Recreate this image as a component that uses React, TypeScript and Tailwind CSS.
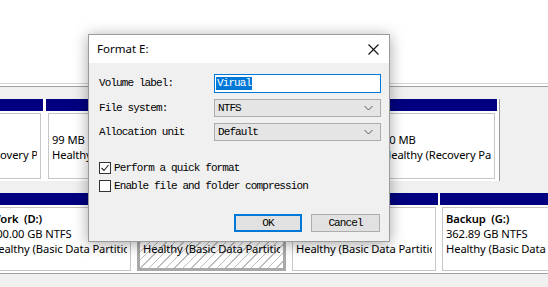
import React from 'react';

const navy = 'bg-[#000080]';

type Part = { w: number; lines?: string[]; hatched?: boolean; bold?: boolean };

const Partition = ({ w, lines = [], hatched, bold }: Part) => (
  <div className="flex flex-col shrink-0" style={{ width: w }}>
    <div className={`h-[12px] ${navy}`} />
    <div className="flex-1 bg-white p-[2px]">
      <div
        className={
          hatched
            ? 'h-full border-[3px] border-[#a9a9a9] px-[3px] pt-[1px] bg-[repeating-linear-gradient(135deg,#ffffff_0px,#ffffff_5px,#bdbdbd_5px,#bdbdbd_6px)]'
            : 'h-full border border-[#c6c6c6] px-[3px] pt-[3px]'
        }
      >
        {lines.map((t, i) => (
          <div
            key={i}
            className={`h-[15px] leading-[15px] whitespace-pre overflow-hidden text-[11.2px] tracking-[-0.1px] text-black ${bold && i === 0 ? 'font-semibold' : ''}`}
          >
            {t}
          </div>
        ))}
      </div>
    </div>
  </div>
);

const Chevron = () => (
  <svg width="9" height="6" viewBox="0 0 9 6" className="shrink-0">
    <polyline points="0.5,1 4.5,5 8.5,1" fill="none" stroke="#5a5a5a" strokeWidth="1" />
  </svg>
);

const Select = ({ value }: { value: string }) => (
  <div className="w-[167px] h-[18px] flex items-center justify-between bg-[#e5e5e5] border border-[#adadad] pl-[3px] pr-[7px]">
    <span>{value}</span>
    <Chevron />
  </div>
);

const CheckBox = ({ checked }: { checked?: boolean }) => (
  <div className="w-[12px] h-[12px] border border-[#333333] bg-white flex items-center justify-center shrink-0">
    {checked && (
      <svg width="10" height="10" viewBox="0 0 10 10">
        <polyline points="1.5,5 4,7.5 8.5,2" fill="none" stroke="#222" strokeWidth="1.1" />
      </svg>
    )}
  </div>
);

const FormatDialog = () => (
  <div className="absolute left-[88px] top-[34px] w-[302px] h-[208px] flex flex-col border border-[#9b9b9b] bg-[#f0f0f0] shadow-[0_2px_14px_rgba(0,0,0,0.35)]">
    <div className="h-[28px] bg-white flex items-center justify-between pl-[8px] pr-[10px] font-['Noto_Sans',sans-serif] text-[11.5px] text-black">
      <span>Format E:</span>
      <svg width="11" height="11" viewBox="0 0 11 11">
        <path d="M0.5 0.5L10.5 10.5M10.5 0.5L0.5 10.5" stroke="#111" strokeWidth="1.1" />
      </svg>
    </div>
    <div className="flex-1 flex flex-col pl-[10px] pr-[8px] pt-[11px] font-['Liberation_Mono',monospace] text-[11px] tracking-[-0.9px] text-black">
      <div className="flex flex-col gap-[6px]">
        <div className="flex items-center">
          <span className="w-[115px]">Volume label:</span>
          <div className="w-[167px] h-[19px] bg-white border border-[#0078d7] flex items-center pl-[1px]">
            <span className="bg-[#0078d7] text-white leading-[13px] px-[1px]">Virual</span>
          </div>
        </div>
        <div className="flex items-center">
          <span className="w-[115px]">File system:</span>
          <Select value="NTFS" />
        </div>
        <div className="flex items-center">
          <span className="w-[115px]">Allocation unit</span>
          <Select value="Default" />
        </div>
      </div>
      <div className="flex flex-col gap-[6px] mt-[21px]">
        <div className="flex items-center gap-[3px] h-[12px]">
          <CheckBox checked />
          <span>Perform a quick format</span>
        </div>
        <div className="flex items-center gap-[3px] h-[12px]">
          <CheckBox />
          <span>Enable file and folder compression</span>
        </div>
      </div>
      <div className="flex justify-end gap-[9px] mt-[22px] pr-[1px]">
        <button className="w-[68px] h-[18px] bg-[#e1e1e1] border-2 border-[#0078d7] leading-none">OK</button>
        <button className="w-[69px] h-[18px] bg-[#e1e1e1] border border-[#adadad] leading-none">Cancel</button>
      </div>
    </div>
  </div>
);

export default function App() {
  return (
    <div className="relative w-[548px] h-[287px] overflow-hidden bg-[#f0f0f0] font-['Noto_Sans',sans-serif]">
      <div className="h-[84px] bg-white border-b border-[#d4d4d4]" />
      <div className="h-[3px] bg-white border-b border-[#a0a0a0]" />
      <div className="pt-[12px]">
        {/* disk row 1 */}
        <div className="flex gap-[3px] ml-[-70px] w-[570px] h-[82px] bg-white border-r border-[#9a9a9a]">
          <Partition w={113} lines={['', '499 MB', 'Healthy (Recovery Partition)']} />
          <Partition w={114} lines={['', '99 MB', 'Healthy (EFI System Partition)']} />
          <Partition w={211} />
          <Partition w={120} lines={['', '50 MB', 'Healthy (Recovery Partition)']} />
        </div>
        {/* disk row 2 */}
        <div className="flex gap-[2px] ml-[-16px] mt-[12px] h-[81px] bg-white border-b border-[#a0a0a0]">
          <Partition w={149} bold lines={['Work  (D:)', '500.00 GB NTFS', 'Healthy (Basic Data Partition)']} />
          <Partition w={153} hatched lines={['Virual  (E:)', '200.00 GB NTFS', 'Healthy (Basic Data Partition)']} />
          <Partition w={148} lines={['', '150.00 GB NTFS', 'Healthy (Basic Data Partition)']} />
          <Partition w={160} bold lines={['Backup  (G:)', '362.89 GB NTFS', 'Healthy (Basic Data Partition)']} />
        </div>
      </div>
      <FormatDialog />
    </div>
  );
}
